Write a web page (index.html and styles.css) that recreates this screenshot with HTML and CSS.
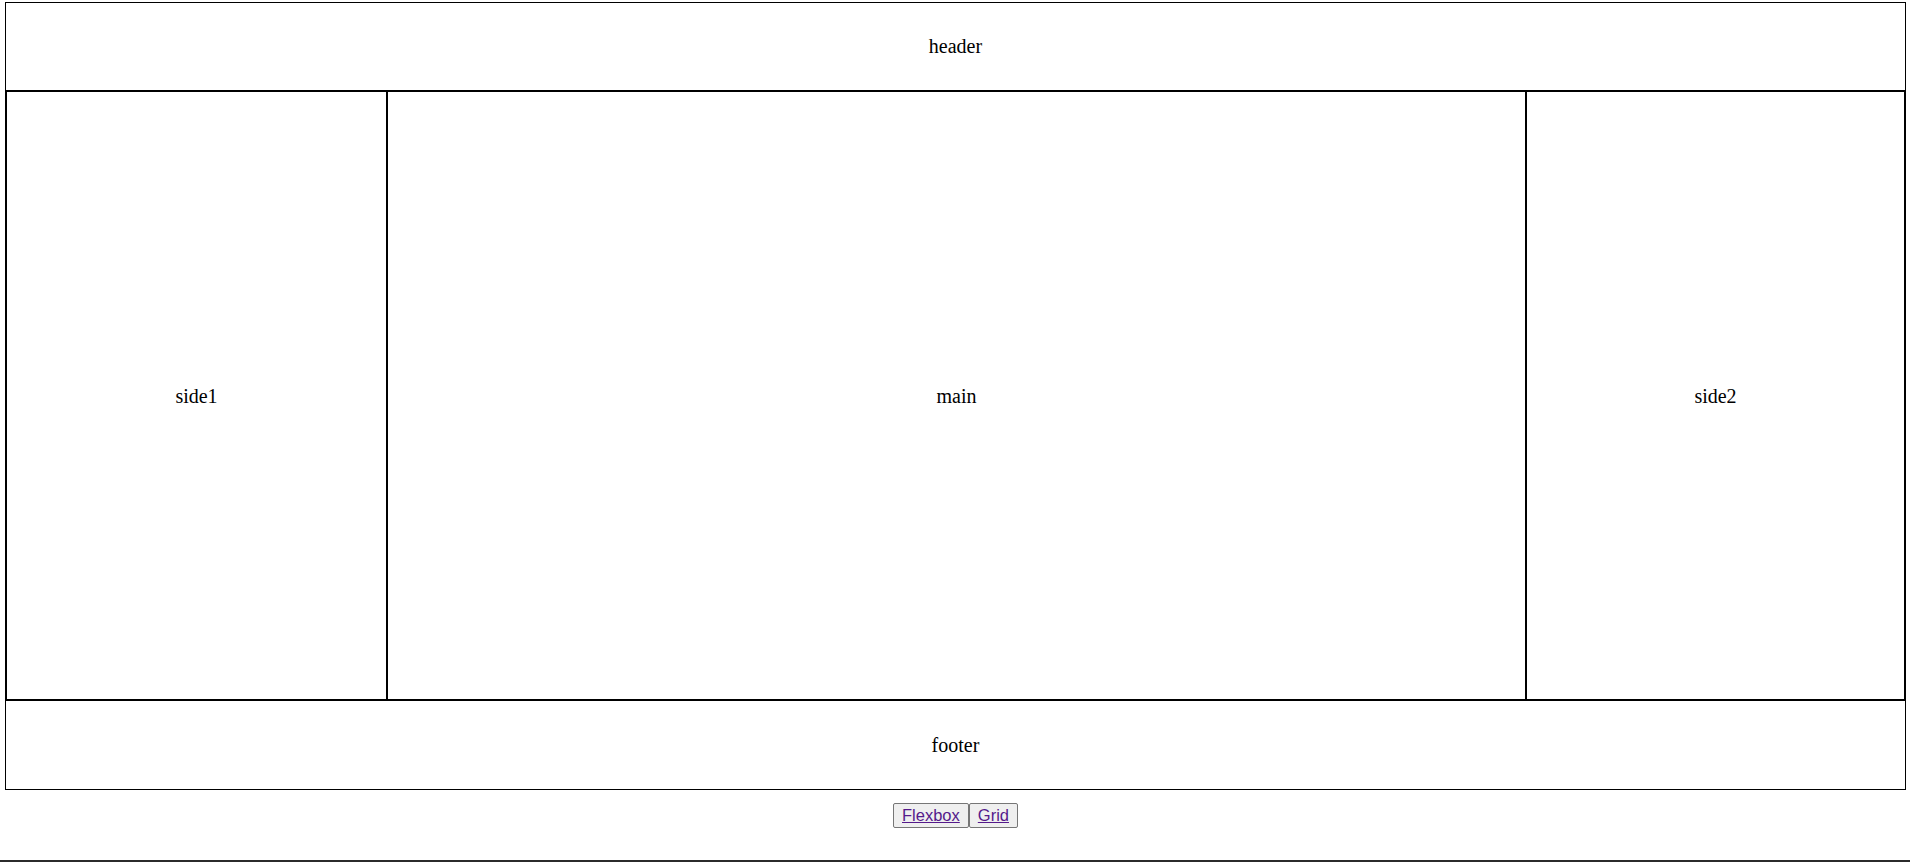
FILE: index.html
```html
<!DOCTYPE html>
<html lang="en">
<head>
<meta charset="utf-8">
<title>Layout</title>
<link rel="stylesheet" href="styles.css">
</head>
<body>
<div class="page">
  <div class="container">
    <div class="header">header</div>
    <div class="middle">
      <div class="side side1">side1</div>
      <div class="main">main</div>
      <div class="side side2">side2</div>
    </div>
    <div class="footer">footer</div>
  </div>
  <div class="buttons">
    <button class="btn"><a href="#">Flexbox</a></button><button class="btn"><a href="#">Grid</a></button>
  </div>
  <div class="bottom-line"></div>
</div>
</body>
</html>
```
FILE: styles.css
```css
html, body {
  margin: 0;
  padding: 0;
  background: #fff;
}
.page {
  display: flex;
  flex-direction: column;
  min-height: 862px;
  padding: 2px 4px 0 5px;
  box-sizing: border-box;
  font-family: "Liberation Serif", "Times New Roman", serif;
  font-size: 20px;
  color: #000;
}
.container {
  border: 1px solid #000;
  display: flex;
  flex-direction: column;
}
.header, .footer {
  height: 88px;
  display: flex;
  align-items: center;
  justify-content: center;
}
.header { height: 87px; }
.middle {
  height: 607px;
  display: grid;
  grid-template-columns: 381px 1fr 379px;
  border: 2px solid #000;
  border-left-width: 1px;
  border-right-width: 1px;
}
.side, .main {
  display: flex;
  align-items: center;
  justify-content: center;
  padding-top: 1px;
}
.side1 { border-right: 2px solid #000; }
.side2 { border-left: 2px solid #000; }
.buttons {
  display: flex;
  justify-content: center;
  margin-top: 13px;
}
.btn {
  font-family: "Liberation Sans", Arial, sans-serif;
  font-size: 16.5px;
  background: #efefef;
  border: 1px solid #767676;
  border-radius: 2px;
  padding: 0 8px;
  height: 25px;
  margin: 0;
}
.btn a {
  color: #551a8b;
  text-decoration: underline;
}
.bottom-line {
  margin-top: auto;
  height: 2px;
  background: #2b2b2b;
  margin-left: -5px;
  margin-right: -4px;
}
```
